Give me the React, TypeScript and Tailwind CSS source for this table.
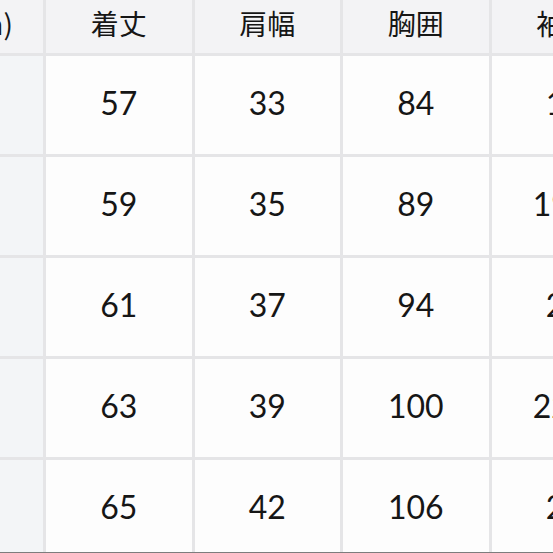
import React from "react";

const headers = ["サイズ(cm)", "着丈", "肩幅", "胸囲", "袖丈"];
const rows = [
  ["S", "57", "33", "84", "18"],
  ["M", "59", "35", "89", "19.5"],
  ["L", "61", "37", "94", "21"],
  ["XL", "63", "39", "100", "22.5"],
  ["XXL", "65", "42", "106", "24"],
];

export default function App() {
  return (
    <div className="w-[553px] h-[553px] overflow-hidden bg-[#e5e5e7] relative">
      <div className="ml-[-102.5px] grid grid-cols-[145.5px_145.5px_145.5px_145.5px_145.5px] grid-rows-[53px_98px_98px_98px_98px_98px] gap-x-[3px] gap-y-[3px] text-[#161616]">
        {headers.map((h, i) => (
          <div
            key={h}
            className={
              "flex items-center pb-[8px] bg-[#f3f3f5] text-[28px] whitespace-nowrap overflow-hidden " +
              (i === 0 ? "justify-end pr-[30px]" : "justify-center")
            }
            style={{ fontFamily: '"Noto Sans CJK JP", "Noto Sans", sans-serif' }}
          >
            <span>{h}</span>
          </div>
        ))}
        {rows.map((r) =>
          r.map((c, j) => (
            <div
              key={r[0] + j}
              className={
                "flex items-center justify-center pb-[4px] text-[32px] whitespace-nowrap " +
                (j === 0 ? "bg-[#f3f5f7]" : "bg-[#fdfdfd]")
              }
              style={{ fontFamily: 'Lato, "Noto Sans", sans-serif' }}
            >
              {c}
            </div>
          ))
        )}
      </div>
      <div className="absolute left-0 right-0 bottom-0 h-[1.5px] bg-[#7d7d7d]" />
    </div>
  );
}
